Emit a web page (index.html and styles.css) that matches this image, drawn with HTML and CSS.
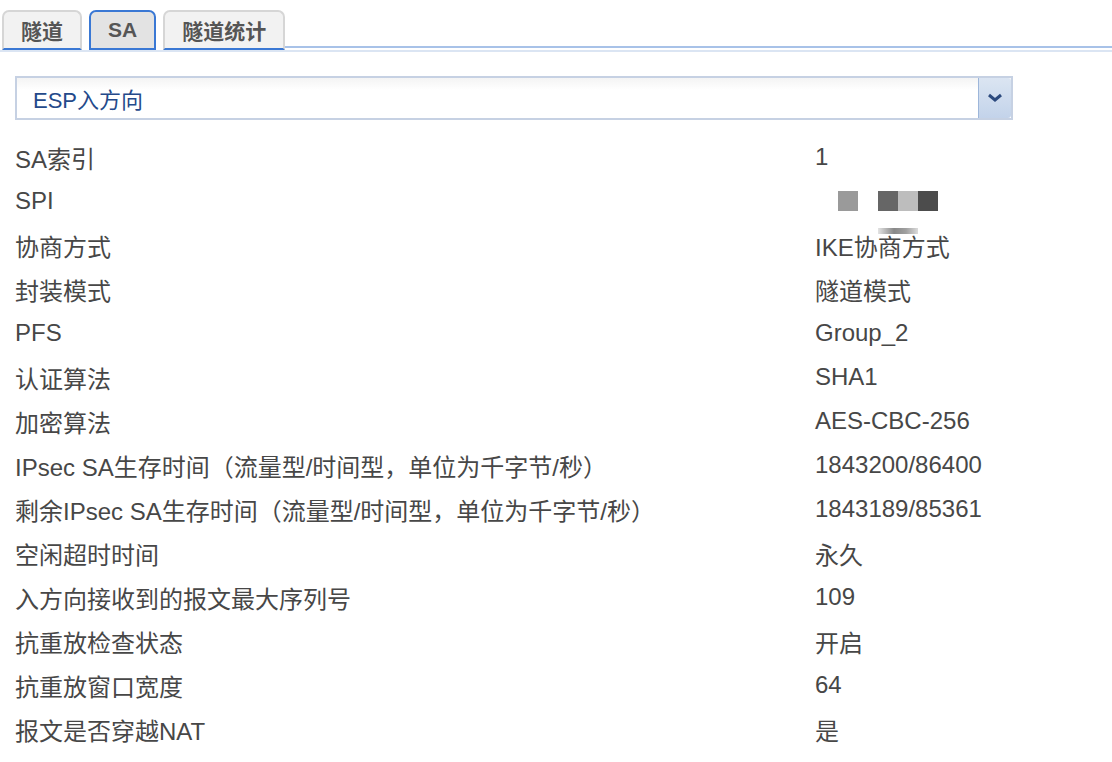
FILE: index.html
```html
<!DOCTYPE html>
<html>
<head>
    <title>SA</title>
    <link rel="stylesheet" href="styles.css">
</head>
<body>
    <div class="tabs">
        <div class="tab">隧道</div>
        <div class="tab active">SA</div>
        <div class="tab">隧道统计</div>
        <div class="tab-rest"></div>
    </div>

    <div class="panel">
        <div class="select">
            <span class="select-text">ESP入方向</span>
            <span class="select-btn">
                <svg width="18" height="12" viewBox="0 0 18 12">
                    <path d="M3 3 L9 8 L15 3" fill="none" stroke="#2c4a7e" stroke-width="3"/>
                </svg>
            </span>
        </div>

        <div class="rows">
            <div class="row"><span class="label">SA索引</span><span class="value">1</span></div>
            <div class="row">
                <span class="label">SPI</span>
                <span class="value spi">
                    <i class="px p1"></i><i class="px gap"></i><i class="px p2"></i><i class="px p3"></i><i class="px p4"></i>
                    <i class="smear"></i>
                </span>
            </div>
            <div class="row"><span class="label">协商方式</span><span class="value">IKE协商方式</span></div>
            <div class="row"><span class="label">封装模式</span><span class="value">隧道模式</span></div>
            <div class="row"><span class="label">PFS</span><span class="value">Group_2</span></div>
            <div class="row"><span class="label">认证算法</span><span class="value">SHA1</span></div>
            <div class="row"><span class="label">加密算法</span><span class="value">AES-CBC-256</span></div>
            <div class="row"><span class="label">IPsec SA生存时间（流量型/时间型，单位为千字节/秒）</span><span class="value">1843200/86400</span></div>
            <div class="row"><span class="label">剩余IPsec SA生存时间（流量型/时间型，单位为千字节/秒）</span><span class="value">1843189/85361</span></div>
            <div class="row"><span class="label">空闲超时时间</span><span class="value">永久</span></div>
            <div class="row"><span class="label">入方向接收到的报文最大序列号</span><span class="value">109</span></div>
            <div class="row"><span class="label">抗重放检查状态</span><span class="value">开启</span></div>
            <div class="row"><span class="label">抗重放窗口宽度</span><span class="value">64</span></div>
            <div class="row"><span class="label">报文是否穿越NAT</span><span class="value">是</span></div>
        </div>
    </div>
</body>
</html>
```

FILE: styles.css
```css
body {
    margin: 0;
    background: #fff;
    font-family: "Liberation Sans", "Noto Sans CJK SC", sans-serif;
    color: #474747;
}

.tabs {
    display: flex;
    align-items: flex-end;
    padding: 8px 0 0 2px;
    gap: 7px;
    height: 42px;
    border-bottom: 2px solid #dbe5f3;
}

.tab {
    height: 36px;
    padding: 0 17px;
    display: flex;
    align-items: center;
    font-size: 21px;
    font-weight: bold;
    color: #555;
    background: #f2f2f2;
    border: 2px solid #d6d6d6;
    border-bottom: 2px solid #3a78d4;
    border-radius: 7px 7px 0 0;
}

.tab.active {
    background: #e3e3e3;
    border-color: #3a78d4;
}

.tab-rest {
    flex: 1;
    align-self: flex-end;
    height: 2px;
    margin-bottom: 2px;
    margin-left: -7px;
    background: #a8c2e8;
}

.panel {
    padding: 24px 0 0 15px;
}

.select {
    width: 994px;
    height: 40px;
    display: flex;
    align-items: center;
    justify-content: space-between;
    border: 2px solid #c6d1e3;
    background: linear-gradient(#f4f4f4, #fff 30%);
}

.select-text {
    padding-left: 16px;
    font-size: 22px;
    color: #24498a;
}

.select-btn {
    width: 32px;
    height: 40px;
    display: flex;
    align-items: center;
    justify-content: center;
    background: linear-gradient(#dbe5f2, #c3d3ea);
    border-left: 1px solid #9db6da;
    border-radius: 0 3px 3px 0;
}

.rows {
    padding-top: 15px;
}

.row {
    display: flex;
    height: 44px;
    align-items: center;
    font-size: 24px;
}

.label {
    width: 800px;
    white-space: nowrap;
}

.value {
    white-space: nowrap;
}

.spi {
    position: relative;
    display: flex;
    align-items: center;
    padding-left: 23px;
    height: 20px;
}

.px {
    display: inline-block;
    width: 20px;
    height: 20px;
}

.p1 { background: #9a9a9a; }
.gap { background: transparent; }
.p2 { background: #666; }
.p3 { background: #bdbdbd; }
.p4 { background: #4c4c4c; }

.smear {
    position: absolute;
    left: 63px;
    top: 37px;
    width: 40px;
    height: 6px;
    background: linear-gradient(90deg, #d8d8d8, #555 40%, #777 70%, #ccc);
    opacity: 0.7;
}
```
